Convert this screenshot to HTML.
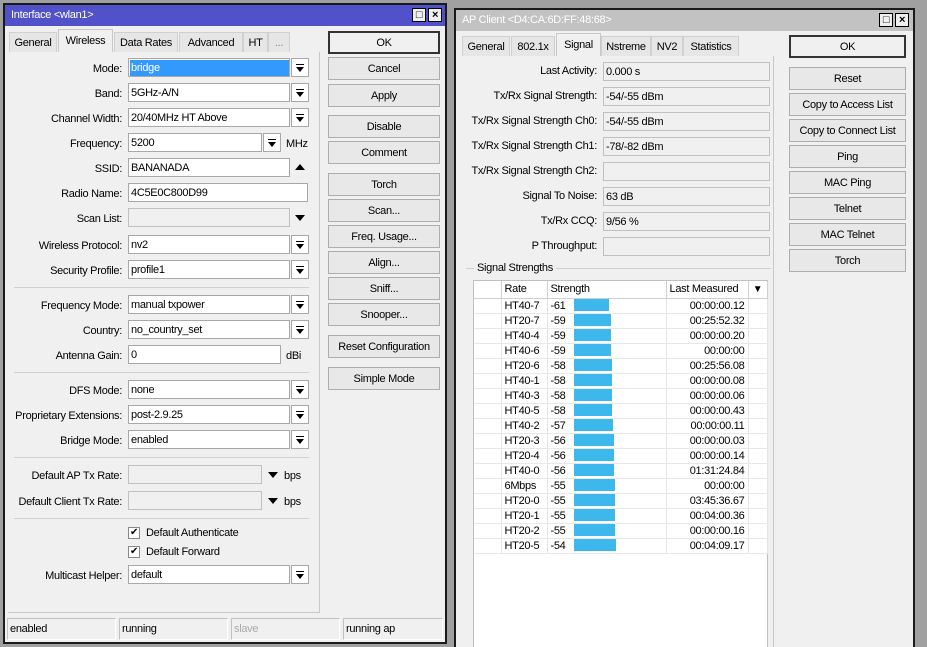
<!DOCTYPE html>
<html style="width:927px;height:647px;overflow:hidden"><head><meta charset="utf-8"><style>
*{box-sizing:border-box;margin:0;padding:0}
body{width:927px;height:647px;background:#a0a0a0;font:11px "Liberation Sans",Arial,sans-serif;letter-spacing:-0.3px;color:#000;position:relative;overflow:hidden}
.a{position:absolute}
.win{position:absolute;background:#f0f0f0;border:2px solid #1a1a1a;overflow:hidden}
.title{position:absolute;left:0;right:0;top:0;height:21px;color:#fff;padding:4px 0 0 6px}
.tb{position:absolute;top:3px;width:14px;height:14px;border:1px solid #000;background:#f0f0f0;font-size:11px;line-height:12px;text-align:center;color:#000;font-weight:bold}
.tab{position:absolute;height:20px;border:1px solid #d0d0d0;border-bottom:none;background:#e6e6e6;padding:4px 0 0;text-align:center;white-space:nowrap}
.tab.on{background:#f0f0f0;height:23px;top:-3px;border-color:#c8c8c8;padding-top:5px}
.panel{position:absolute;border:1px solid #c8c8c8}
.lbl{position:absolute;text-align:right;white-space:nowrap;margin-top:2px}
.f{position:absolute;height:19px;background:#fff;border:1px solid #a8a8a8;padding:3px 0 0 2px;white-space:nowrap}
.f.d{background:#f0f0f0;border-color:#c0c0c0}
.dd{position:absolute;width:18px;height:19px;background:#fff;border:1px solid #a8a8a8}
.dd:after{content:"";position:absolute;left:4px;top:5px;width:8px;height:1px;background:#000}
.dd i{position:absolute;left:4px;top:8px;width:0;height:0;border-left:4px solid transparent;border-right:4px solid transparent;border-top:5px solid #000}
.sep{position:absolute;height:1px;background:#d0d0d0}
.btn{position:absolute;height:23px;border:1px solid #adadad;background:#e8e8e8;text-align:center;padding-top:5px;white-space:nowrap}
.btn.def{border:2px solid #333;background:#f0f0f0;padding-top:4px}
.tri{position:absolute;width:0;height:0;border-left:5px solid transparent;border-right:5px solid transparent;border-top:6px solid #000}
.st{position:absolute;top:0;height:22px;border:1px solid #c0c0c0;border-right-color:#fff;border-bottom-color:#fff;padding:4px 0 0 2px}
table{border-collapse:collapse;table-layout:fixed;position:absolute;left:474px;top:281px;width:293px;background:#fff}
td{height:15px;border-right:1px solid #e4e4e4;border-bottom:1px solid #e8e8e8;padding:0 3px;line-height:14px;white-space:nowrap;overflow:hidden}
th{height:17px;font-weight:normal;text-align:left;border-right:1px solid #d0d0d0;border-bottom:1px solid #d0d0d0;padding:0 3px;background:#fff;white-space:nowrap;overflow:hidden}
.bar{display:inline-block;height:12px;background:#3db8ec;vertical-align:-2px;margin-left:8px}
td.r{text-align:right}
</style></head><body>

<div class="win" style="left:3px;top:3px;width:444px;height:641px">
  <div class="title" style="background:#5151c9">Interface &lt;wlan1&gt;</div>
  <div class="tb" style="left:407px">□</div><div class="tb" style="left:423px">×</div>
  <div class="a" style="left:4px;top:27px;width:312px;height:20px">
    <div class="tab" style="left:0;width:48px">General</div>
    <div class="tab on" style="left:49px;width:55px">Wireless</div>
    <div class="tab" style="left:105px;width:64px">Data Rates</div>
    <div class="tab" style="left:170px;width:64px">Advanced</div>
    <div class="tab" style="left:234px;width:25px">HT</div>
    <div class="tab" style="left:259px;width:22px;color:#888">...</div>
  </div>
  <div class="panel" style="left:3px;top:47px;width:312px;height:561px;border-top:none;border-left:none"></div>
</div>

<div class="lbl" style="right:805px;top:61px">Mode:</div><div class="f" style="left:128px;top:58px;width:162px;"><span style="background:#3399ff;color:#fff;display:block;margin:-2px 0 0 -1px;height:16px;padding:2px 0 0 1px">bridge</span></div><div class="dd" style="left:291px;top:58px"><i></i></div>
<div class="lbl" style="right:805px;top:86px">Band:</div><div class="f" style="left:128px;top:83px;width:162px">5GHz-A/N</div><div class="dd" style="left:291px;top:83px"><i></i></div>
<div class="lbl" style="right:805px;top:111px">Channel Width:</div><div class="f" style="left:128px;top:108px;width:162px">20/40MHz HT Above</div><div class="dd" style="left:291px;top:108px"><i></i></div>
<div class="lbl" style="right:805px;top:136px">Frequency:</div><div class="f" style="left:128px;top:133px;width:134px">5200</div><div class="dd" style="left:263px;top:133px"><i></i></div><div class="lbl" style="left:286px;top:136px">MHz</div>
<div class="lbl" style="right:805px;top:161px">SSID:</div><div class="f" style="left:128px;top:158px;width:162px">BANANADA</div><div class="tri" style="left:295px;top:164px;border-top:none;border-bottom:6px solid #000"></div>
<div class="lbl" style="right:805px;top:186px">Radio Name:</div><div class="f" style="left:128px;top:183px;width:180px">4C5E0C800D99</div>
<div class="lbl" style="right:805px;top:211px">Scan List:</div><div class="f d" style="left:128px;top:208px;width:162px"></div><div class="tri" style="left:295px;top:215px"></div>
<div class="lbl" style="right:805px;top:238px">Wireless Protocol:</div><div class="f" style="left:128px;top:235px;width:162px">nv2</div><div class="dd" style="left:291px;top:235px"><i></i></div>
<div class="lbl" style="right:805px;top:263px">Security Profile:</div><div class="f" style="left:128px;top:260px;width:162px">profile1</div><div class="dd" style="left:291px;top:260px"><i></i></div>
<div class="sep" style="left:14px;top:287px;width:295px"></div>
<div class="lbl" style="right:805px;top:298px">Frequency Mode:</div><div class="f" style="left:128px;top:295px;width:162px">manual txpower</div><div class="dd" style="left:291px;top:295px"><i></i></div>
<div class="lbl" style="right:805px;top:323px">Country:</div><div class="f" style="left:128px;top:320px;width:162px">no_country_set</div><div class="dd" style="left:291px;top:320px"><i></i></div>
<div class="lbl" style="right:805px;top:348px">Antenna Gain:</div><div class="f" style="left:128px;top:345px;width:153px">0</div><div class="lbl" style="left:286px;top:348px">dBi</div>
<div class="sep" style="left:14px;top:372px;width:295px"></div>
<div class="lbl" style="right:805px;top:383px">DFS Mode:</div><div class="f" style="left:128px;top:380px;width:162px">none</div><div class="dd" style="left:291px;top:380px"><i></i></div>
<div class="lbl" style="right:805px;top:408px">Proprietary Extensions:</div><div class="f" style="left:128px;top:405px;width:162px">post-2.9.25</div><div class="dd" style="left:291px;top:405px"><i></i></div>
<div class="lbl" style="right:805px;top:433px">Bridge Mode:</div><div class="f" style="left:128px;top:430px;width:162px">enabled</div><div class="dd" style="left:291px;top:430px"><i></i></div>
<div class="sep" style="left:14px;top:457px;width:295px"></div>
<div class="lbl" style="right:805px;top:468px">Default AP Tx Rate:</div><div class="f d" style="left:128px;top:465px;width:134px"></div><div class="tri" style="left:268px;top:472px"></div><div class="lbl" style="left:284px;top:468px">bps</div>
<div class="lbl" style="right:805px;top:494px">Default Client Tx Rate:</div><div class="f d" style="left:128px;top:491px;width:134px"></div><div class="tri" style="left:268px;top:498px"></div><div class="lbl" style="left:284px;top:494px">bps</div>
<div class="sep" style="left:14px;top:518px;width:295px"></div>
<div class="a" style="left:128px;top:527px;width:12px;height:12px;border:1px solid #888;background:#fff;font-size:10px;line-height:10px;text-align:center">✔</div><div class="a" style="left:146px;top:527px">Default Authenticate</div>
<div class="a" style="left:128px;top:546px;width:12px;height:12px;border:1px solid #888;background:#fff;font-size:10px;line-height:10px;text-align:center">✔</div><div class="a" style="left:146px;top:546px">Default Forward</div>
<div class="lbl" style="right:805px;top:568px">Multicast Helper:</div><div class="f" style="left:128px;top:565px;width:162px">default</div><div class="dd" style="left:291px;top:565px"><i></i></div>

<div class="btn def" style="left:328px;top:31px;width:112px">OK</div>
<div class="btn" style="left:328px;top:57px;width:112px">Cancel</div>
<div class="btn" style="left:328px;top:84px;width:112px">Apply</div>
<div class="btn" style="left:328px;top:115px;width:112px">Disable</div>
<div class="btn" style="left:328px;top:141px;width:112px">Comment</div>
<div class="btn" style="left:328px;top:173px;width:112px">Torch</div>
<div class="btn" style="left:328px;top:199px;width:112px">Scan...</div>
<div class="btn" style="left:328px;top:225px;width:112px">Freq. Usage...</div>
<div class="btn" style="left:328px;top:251px;width:112px">Align...</div>
<div class="btn" style="left:328px;top:277px;width:112px">Sniff...</div>
<div class="btn" style="left:328px;top:303px;width:112px">Snooper...</div>
<div class="btn" style="left:328px;top:335px;width:112px">Reset Configuration</div>
<div class="btn" style="left:328px;top:367px;width:112px">Simple Mode</div>

<div class="a" style="left:7px;top:618px;width:436px;height:22px">
  <div class="st" style="left:0;width:109px">enabled</div>
  <div class="st" style="left:112px;width:109px">running</div>
  <div class="st" style="left:224px;width:109px;color:#aaa">slave</div>
  <div class="st" style="left:336px;width:100px">running ap</div>
</div>

<div class="win" style="left:454px;top:8px;width:461px;height:639px;border-bottom:none">
  <div class="title" style="background:#c2c2c2">AP Client &lt;D4:CA:6D:FF:48:68&gt;</div>
  <div class="tb" style="left:423px">□</div><div class="tb" style="left:439px">×</div>
  <div class="a" style="left:6px;top:26px;width:320px;height:20px">
    <div class="tab" style="left:0;width:48px">General</div>
    <div class="tab" style="left:49px;width:44px">802.1x</div>
    <div class="tab on" style="left:94px;width:45px">Signal</div>
    <div class="tab" style="left:139px;width:50px">Nstreme</div>
    <div class="tab" style="left:189px;width:32px">NV2</div>
    <div class="tab" style="left:221px;width:56px">Statistics</div>
  </div>
  <div class="panel" style="left:5px;top:46px;width:313px;height:600px;border-top:none;border-left:none;border-bottom:none"></div>
</div>

<div class="lbl" style="right:330px;top:63px">Last Activity:</div><div class="f d" style="left:603px;top:62px;width:167px">0.000 s</div>
<div class="lbl" style="right:330px;top:88px">Tx/Rx Signal Strength:</div><div class="f d" style="left:603px;top:87px;width:167px">-54/-55 dBm</div>
<div class="lbl" style="right:330px;top:113px">Tx/Rx Signal Strength Ch0:</div><div class="f d" style="left:603px;top:112px;width:167px">-54/-55 dBm</div>
<div class="lbl" style="right:330px;top:138px">Tx/Rx Signal Strength Ch1:</div><div class="f d" style="left:603px;top:137px;width:167px">-78/-82 dBm</div>
<div class="lbl" style="right:330px;top:163px">Tx/Rx Signal Strength Ch2:</div><div class="f d" style="left:603px;top:162px;width:167px"></div>
<div class="lbl" style="right:330px;top:188px">Signal To Noise:</div><div class="f d" style="left:603px;top:187px;width:167px">63 dB</div>
<div class="lbl" style="right:330px;top:213px">Tx/Rx CCQ:</div><div class="f d" style="left:603px;top:212px;width:167px">9/56 %</div>
<div class="lbl" style="right:330px;top:238px">P Throughput:</div><div class="f d" style="left:603px;top:237px;width:167px"></div>
<div class="sep" style="left:466px;top:268px;width:305px"></div>
<div class="a" style="left:474px;top:262px;background:#f0f0f0;padding:0 3px">Signal Strengths</div>
<div class="a" style="left:473px;top:280px;width:295px;height:367px;background:#fff;border:1px solid #c0c0c0;border-bottom:none"></div>
<table>
<colgroup><col style="width:27px"><col style="width:46px"><col style="width:119px"><col style="width:82px"><col style="width:19px"></colgroup>
<tr><th></th><th>Rate</th><th>Strength</th><th>Last Measured</th><th style="text-align:center;font-size:10px">▼</th></tr>
<tr><td></td><td>HT40-7</td><td>-61<span class="bar" style="width:35px"></span></td><td class="r">00:00:00.12</td><td></td></tr>
<tr><td></td><td>HT20-7</td><td>-59<span class="bar" style="width:37px"></span></td><td class="r">00:25:52.32</td><td></td></tr>
<tr><td></td><td>HT40-4</td><td>-59<span class="bar" style="width:37px"></span></td><td class="r">00:00:00.20</td><td></td></tr>
<tr><td></td><td>HT40-6</td><td>-59<span class="bar" style="width:37px"></span></td><td class="r">00:00:00</td><td></td></tr>
<tr><td></td><td>HT20-6</td><td>-58<span class="bar" style="width:38px"></span></td><td class="r">00:25:56.08</td><td></td></tr>
<tr><td></td><td>HT40-1</td><td>-58<span class="bar" style="width:38px"></span></td><td class="r">00:00:00.08</td><td></td></tr>
<tr><td></td><td>HT40-3</td><td>-58<span class="bar" style="width:38px"></span></td><td class="r">00:00:00.06</td><td></td></tr>
<tr><td></td><td>HT40-5</td><td>-58<span class="bar" style="width:38px"></span></td><td class="r">00:00:00.43</td><td></td></tr>
<tr><td></td><td>HT40-2</td><td>-57<span class="bar" style="width:39px"></span></td><td class="r">00:00:00.11</td><td></td></tr>
<tr><td></td><td>HT20-3</td><td>-56<span class="bar" style="width:40px"></span></td><td class="r">00:00:00.03</td><td></td></tr>
<tr><td></td><td>HT20-4</td><td>-56<span class="bar" style="width:40px"></span></td><td class="r">00:00:00.14</td><td></td></tr>
<tr><td></td><td>HT40-0</td><td>-56<span class="bar" style="width:40px"></span></td><td class="r">01:31:24.84</td><td></td></tr>
<tr><td></td><td>6Mbps</td><td>-55<span class="bar" style="width:41px"></span></td><td class="r">00:00:00</td><td></td></tr>
<tr><td></td><td>HT20-0</td><td>-55<span class="bar" style="width:41px"></span></td><td class="r">03:45:36.67</td><td></td></tr>
<tr><td></td><td>HT20-1</td><td>-55<span class="bar" style="width:41px"></span></td><td class="r">00:04:00.36</td><td></td></tr>
<tr><td></td><td>HT20-2</td><td>-55<span class="bar" style="width:41px"></span></td><td class="r">00:00:00.16</td><td></td></tr>
<tr><td></td><td>HT20-5</td><td>-54<span class="bar" style="width:42px"></span></td><td class="r">00:04:09.17</td><td></td></tr>
</table>

<div class="btn def" style="left:789px;top:35px;width:117px">OK</div>
<div class="btn" style="left:789px;top:67px;width:117px">Reset</div>
<div class="btn" style="left:789px;top:93px;width:117px">Copy to Access List</div>
<div class="btn" style="left:789px;top:119px;width:117px">Copy to Connect List</div>
<div class="btn" style="left:789px;top:145px;width:117px">Ping</div>
<div class="btn" style="left:789px;top:171px;width:117px">MAC Ping</div>
<div class="btn" style="left:789px;top:197px;width:117px">Telnet</div>
<div class="btn" style="left:789px;top:223px;width:117px">MAC Telnet</div>
<div class="btn" style="left:789px;top:249px;width:117px">Torch</div>
</body></html>
